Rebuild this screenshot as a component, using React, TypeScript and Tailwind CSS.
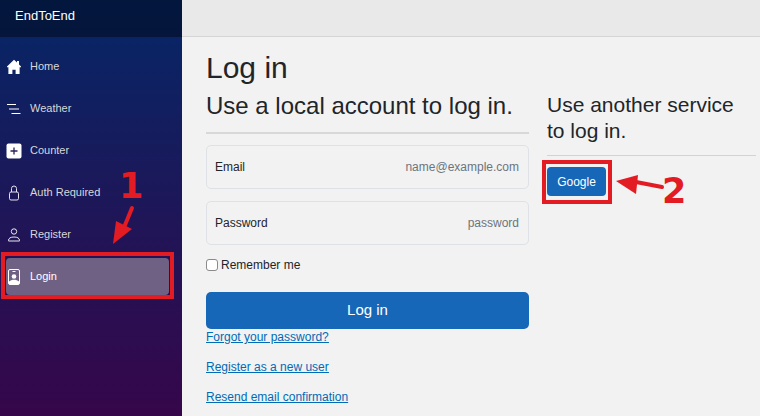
import React from 'react';

const navItems = [
  { label: 'Home', icon: 'home' },
  { label: 'Weather', icon: 'weather' },
  { label: 'Counter', icon: 'counter' },
  { label: 'Auth Required', icon: 'lock' },
  { label: 'Register', icon: 'person' },
  { label: 'Login', icon: 'badge', active: true },
];

function NavIcon({ name }: { name: string }) {
  if (name === 'home') {
    return (
      <svg width="16" height="16" viewBox="0 0 16 16" fill="#fff">
        <path d="M8 .8 1 7.400v.9h1.400V15h4v-4.200h3.200V15h4V8.300H15v-.9l-2-1.900V2h-2v1.600z" />
      </svg>
    );
  }
  if (name === 'weather') {
    return (
      <svg width="16" height="16" viewBox="0 0 16 16" stroke="#fff" strokeWidth="1" fill="none">
        <path d="M1 3.500h9M3 8h10M5.500 12.500h9" />
      </svg>
    );
  }
  if (name === 'counter') {
    return (
      <svg width="16" height="16" viewBox="0 0 16 16">
        <rect x="0.500" y="0.500" width="15" height="15" rx="2" fill="#fff" />
        <path d="M8 4.500v7M4.500 8h7" stroke="#27235c" strokeWidth="1.300" />
      </svg>
    );
  }
  if (name === 'lock') {
    return (
      <svg width="16" height="16" viewBox="0 0 16 16" stroke="#e4e2ee" strokeWidth="1" fill="none">
        <rect x="3.500" y="7" width="9" height="8" rx="1.500" />
        <path d="M5.500 7V3.500a2.500 2.500 0 0 1 5 0V7" />
      </svg>
    );
  }
  if (name === 'person') {
    return (
      <svg width="16" height="16" viewBox="0 0 16 16" stroke="#e8e6f0" strokeWidth="1" fill="none">
        <circle cx="8" cy="4.500" r="2.700" />
        <path d="M2.500 13.500c0-2.400 2.200-3.500 5.500-3.500s5.500 1.100 5.500 3.500v.5h-11z" />
      </svg>
    );
  }
  return (
    <svg width="16" height="16" viewBox="0 0 16 16">
      <rect x="2.500" y="0.500" width="11" height="15" rx="1.500" fill="none" stroke="#fff" />
      <path d="M6.500 2.500h3" stroke="#fff" strokeWidth="1" />
      <circle cx="8" cy="7.500" r="2.300" fill="#fff" />
      <path d="M3 15v-2.500c1.500-1.300 3-1.800 5-1.800s3.500.5 5 1.800V15z" fill="#fff" />
    </svg>
  );
}

function FloatingField({ label, placeholder }: { label: string; placeholder: string }) {
  return (
    <div className="flex h-[44px] items-center justify-between rounded-[5px] border border-[#dee2e6] pl-[8px] pr-[9px] text-[12px]">
      <span className="text-[#212529]">{label}</span>
      <span className="text-[#6c757d]">{placeholder}</span>
    </div>
  );
}

export default function App() {
  return (
    <div className="relative flex h-[416px] w-[760px] overflow-hidden bg-[#f2f2f2] font-['Liberation_Sans',Arial,sans-serif]">
      <aside className="flex w-[182px] shrink-0 flex-col bg-[linear-gradient(180deg,#052767_0%,#36064a_100%)]">
        <div className="flex h-[37px] items-start bg-[rgba(0,0,0,0.4)] pl-[15px] pt-[8px] text-[13px] leading-[15px] text-white">
          EndToEnd
        </div>
        <nav className="flex flex-col gap-[5px] pt-[11px]">
          {navItems.map((item) => (
            <div
              key={item.label}
              className={`mx-[6px] flex h-[37px] w-[163px] items-center gap-[9px] rounded-[4px] text-[11px] ${
                item.active ? 'bg-[#6f6184] text-white' : 'text-[#d7d7d7]'
              }`}
            >
              <NavIcon name={item.icon} />
              <span className="ml-[-1px]">{item.label}</span>
            </div>
          ))}
        </nav>
      </aside>

      <div className="flex min-w-0 flex-1 flex-col">
        <div className="h-[37px] shrink-0 border-b border-[#d6d5d5] bg-[#e9e9e9]" />
        <main className="flex gap-[18px] pl-[24px] pt-[13px] text-[#212529]">
          <section className="w-[323px] shrink-0">
            <h1 className="text-[30px] leading-[36px]">Log in</h1>
            <h2 className="mt-[5px] text-[24px] leading-[29px]">Use a local account to log in.</h2>
            <hr className="mt-[12px] border-t-2 border-[#d8d8d8]" />
            <div className="mt-[11px] flex flex-col gap-[12px]">
              <FloatingField label="Email" placeholder="name@example.com" />
              <FloatingField label="Password" placeholder="password" />
            </div>
            <label className="mt-[12px] flex items-center gap-[3px] text-[12px] leading-[16px]">
              <span className="h-[12px] w-[12px] rounded-[3px] border border-[#8a8a8a] bg-white" />
              Remember me
            </label>
            <button className="mt-[19px] h-[37px] w-full rounded-[5px] bg-[#1767b8] text-[15px] text-white">
              Log in
            </button>
            <div className="mt-[1px] flex flex-col gap-[15px] text-[12px] leading-[15px] text-[#006bb7] underline">
              <a>Forgot your password?</a>
              <a>Register as a new user</a>
              <a>Resend email confirmation</a>
            </div>
          </section>
          <section className="w-[209px] shrink-0 pt-[42px]">
            <h3 className="text-[21px] leading-[26px]">
              Use another service
              <br />
              to log in.
            </h3>
            <hr className="mt-[11px] border-t border-[#d3d3d3]" />
            <button className="mt-[11px] h-[29px] w-[59px] rounded-[4px] bg-[#1767b8] text-[12px] text-white">
              Google
            </button>
          </section>
        </main>
      </div>

      {/* annotations */}
      <div className="absolute left-[1px] top-[252px] h-[47px] w-[173px] border-[4px] border-[#e31b23]" />
      <div className="absolute left-[542px] top-[160px] h-[44px] w-[70px] border-[4px] border-[#e31b23]" />
      <span className="absolute left-[119px] top-[164px] font-['DejaVu_Sans',sans-serif] text-[35px] font-bold leading-[44px] text-[#e31b23]">
        1
      </span>
      <span className="absolute left-[662px] top-[169px] font-['DejaVu_Sans',sans-serif] text-[35px] font-bold leading-[44px] text-[#e31b23]">
        2
      </span>
      <svg className="absolute left-0 top-0" width="760" height="416" fill="#e31b23" stroke="none">
        <path d="M132 208 125 225" stroke="#e31b23" strokeWidth="4" strokeLinecap="round" />
        <path d="M113 244 116 221 132 229z" />
        <path d="M662 187 636 182" stroke="#e31b23" strokeWidth="4" strokeLinecap="round" />
        <path d="M616 181 638 175 636 194z" />
      </svg>
    </div>
  );
}
